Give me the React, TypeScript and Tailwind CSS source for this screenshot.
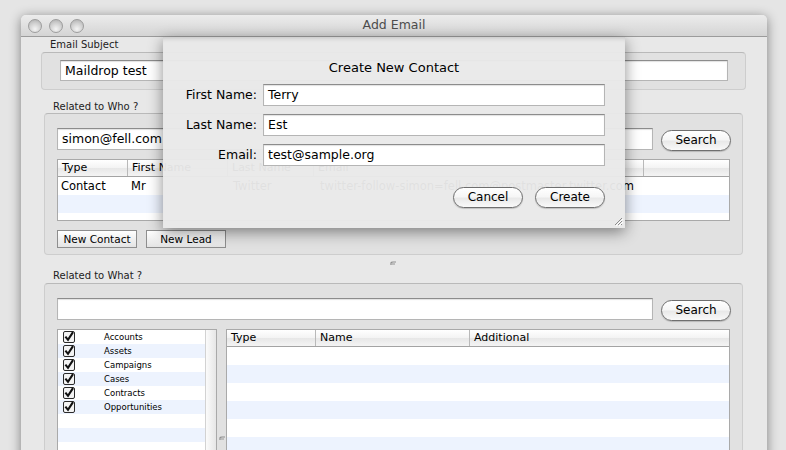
import React from 'react'

const pill =
  "h-[21px] w-[70px] rounded-full border border-[#6f6f6f] bg-[linear-gradient(#ffffff,#f6f6f6_45%,#e9e9e9_55%,#f9f9f9)] shadow-[0_1px_1px_rgba(0,0,0,0.18)] text-[12px] leading-[19px] text-center"

const headerCell =
  "h-full border-r border-[#b9b9b9] pl-[4px] text-[11px] leading-[16px] whitespace-nowrap overflow-hidden"

function TextField({ value, className }: { value?: string; className: string }) {
  return (
    <div
      className={
        'bg-white border border-[#b5b5b5] border-t-[#8c8c8c] shadow-[inset_0_1px_1px_rgba(0,0,0,0.12)] pl-[4px] text-[12.5px] leading-[19px] whitespace-nowrap overflow-hidden ' +
        className
      }
    >
      {value}
    </div>
  )
}

function CheckBox() {
  return (
    <svg width="12" height="12" viewBox="0 0 12 12">
      <rect x="0.5" y="0.5" width="11" height="11" rx="1.5" fill="#f3f3f3" stroke="#2a2a2a" />
      <path d="M2.4 5.6 L5 8.8 L10 1.2" stroke="#111" strokeWidth="2.1" fill="none" />
    </svg>
  )
}

function Grip({ className }: { className: string }) {
  return (
    <svg className={className} width="11" height="11" viewBox="0 0 11 11">
      <path d="M10 3 L3 10 M10 6 L6 10 M10 9 L9 10" stroke="#8a8a8a" strokeWidth="1" />
      <path d="M11 4 L4 11 M11 7 L7 11" stroke="#ffffff" strokeWidth="1" />
    </svg>
  )
}

function SplitDot() {
  return (
    <svg width="7" height="5" viewBox="0 0 7 5">
      <path d="M1 4 L1 2 Q1 1 3 1 L6 1" stroke="#8d8d8d" strokeWidth="1.2" fill="none" />
      <rect x="2" y="2" width="3" height="2" fill="#bdbdbd" />
    </svg>
  )
}

const whatItems = ['Accounts', 'Assets', 'Campaigns', 'Cases', 'Contracts', 'Opportunities', '', '', '']

export default function App() {
  return (
    <div className="w-[786px] h-[450px] overflow-hidden bg-[#e5e5e5] pt-[15px] pl-[21px] font-['DejaVu_Sans',sans-serif] text-black">
      <div className="w-[746px] h-[460px] rounded-t-[5px] bg-[#e8e8e8] shadow-[0_2px_12px_rgba(0,0,0,0.45)] flex flex-col">
        {/* title bar */}
        <div className="relative h-[22px] shrink-0 rounded-t-[5px] bg-[linear-gradient(#ececec,#d4d4d4)] border-b border-[#9b9b9b] flex items-center">
          <div className="flex gap-[7px] pl-[7px]">
            {[0, 1, 2].map((i) => (
              <div
                key={i}
                className="w-[14px] h-[14px] rounded-full border border-[#9d9d9d] bg-[radial-gradient(circle_at_50%_75%,#f4f4f4,#cfcfcf_55%,#ababab)]"
              />
            ))}
          </div>
          <div className="absolute inset-0 flex items-center justify-center text-[12.5px] text-[#4d4d4d]">
            Add Email
          </div>
        </div>

        {/* window body */}
        <div className="relative flex-1 flex flex-col">
          <div className="h-[15px] leading-[15px] pl-[29px] text-[10px] text-[#222]">Email Subject</div>
          <div className="ml-[20px] w-[705px] h-[38px] rounded-[4px] bg-[#e1e1e1] border border-[#cdcdcd] border-t-[#b9b9b9] pt-[7px] pl-[18px]">
            <TextField value="Maildrop test" className="w-[668px] h-[21px]" />
          </div>

          <div className="mt-[9px] h-[15px] leading-[15px] pl-[32px] text-[10px] text-[#222]">Related to Who ?</div>
          <div className="-mt-px ml-[23px] w-[699px] h-[142px] rounded-[4px] bg-[#e1e1e1] border border-[#cdcdcd] border-t-[#b9b9b9] pt-[14px] pl-[12px]">
            <div className="flex items-start">
              <TextField value="simon@fell.com" className="w-[596px] h-[22px]" />
              <div className={pill + ' ml-[8px] mt-[2px]'}>Search</div>
            </div>
            <div className="mt-[8px] w-[673px] h-[62px] bg-white border border-[#a9a9a9]">
              <div className="flex h-[17px] bg-[linear-gradient(#ffffff,#f3f3f3_50%,#e7e7e7_51%,#f4f4f4)] border-b border-[#a3a3a3]">
                <div className={headerCell + ' w-[70px]'}>Type</div>
                <div className={headerCell + ' w-[100px]'}>First Name</div>
                <div className={headerCell + ' w-[86px]'}>Last Name</div>
                <div className={headerCell + ' w-[330px]'}>Email</div>
                <div className="flex-1" />
              </div>
              <div className="flex h-[18px] text-[11.5px] leading-[18px] whitespace-nowrap">
                <div className="w-[70px] pl-[3px]">Contact</div>
                <div className="w-[100px] pl-[3px]">Mr</div>
                <div className="w-[86px] pl-[5px]">Twitter</div>
                <div className="w-[330px] pl-[6px] overflow-hidden">twitter-follow-simon=fell.com@postmaster.twitter.com</div>
              </div>
              <div className="h-[18px] bg-[#edf3fe]" />
            </div>
            <div className="mt-[9px] flex gap-[9px]">
              {['New Contact', 'New Lead'].map((b) => (
                <div
                  key={b}
                  className="w-[80px] h-[18px] border border-[#8e8e8e] bg-[linear-gradient(#ffffff,#f1f1f1_50%,#e4e4e4)] text-[10.5px] leading-[16px] text-center"
                >
                  {b}
                </div>
              ))}
            </div>
          </div>

          <div className="h-[13px] pl-[369px] pt-[6px] flex">
            <SplitDot />
          </div>
          <div className="h-[15px] leading-[15px] pl-[32px] text-[10px] text-[#222]">Related to What ?</div>
          <div className="ml-[23px] w-[699px] h-[200px] rounded-[4px] bg-[#e1e1e1] border border-[#cdcdcd] border-t-[#b9b9b9] pt-[14px] pl-[12px]">
            <div className="flex items-start">
              <TextField className="w-[596px] h-[22px]" />
              <div className={pill + ' ml-[8px] mt-[2px]'}>Search</div>
            </div>
            <div className="mt-[8px] flex">
              <div className="w-[160px] h-[140px] border border-[#a9a9a9] bg-white flex">
                <div className="w-[147px]">
                  {whatItems.map((it, i) => (
                    <div
                      key={i}
                      className={'h-[14px] flex items-center ' + (i % 2 === 1 ? 'bg-[#edf3fe]' : 'bg-white')}
                    >
                      {it && (
                        <>
                          <div className="w-[46px] pl-[5px] flex">
                            <CheckBox />
                          </div>
                          <div className="text-[8.5px] leading-[14px]">{it}</div>
                        </>
                      )}
                    </div>
                  ))}
                </div>
                <div className="flex-1 bg-[linear-gradient(90deg,#fbfbfb,#e6e6e6)] border-l border-[#d2d2d2]" />
              </div>
              <div className="w-[9px] pt-[107px] pl-[1px] flex justify-center">
                <div className="h-[5px]">
                  <SplitDot />
                </div>
              </div>
              <div className="w-[504px] h-[140px] border border-[#a9a9a9] bg-white">
                <div className="flex h-[17px] bg-[linear-gradient(#ffffff,#f3f3f3_50%,#e7e7e7_51%,#f4f4f4)] border-b border-[#a3a3a3]">
                  <div className={headerCell + ' w-[89px]'}>Type</div>
                  <div className={headerCell + ' w-[154px]'}>Name</div>
                  <div className="h-full pl-[4px] text-[11px] leading-[16px]">Additional</div>
                </div>
                {[0, 1, 2, 3, 4, 5].map((r) => (
                  <div key={r} className={'h-[18px] ' + (r % 2 === 1 ? 'bg-[#edf3fe]' : 'bg-white')} />
                ))}
              </div>
            </div>
          </div>

          {/* sheet: Create New Contact */}
          <div className="absolute left-[142px] top-0 w-[462px] h-[191px] bg-[rgba(233,233,233,0.96)] shadow-[0_4px_14px_rgba(0,0,0,0.45),inset_0_5px_5px_-4px_rgba(0,0,0,0.18)]">
            <div className="pt-[22px] h-[40px] leading-[18px] text-center text-[13px]">Create New Contact</div>
            <div className="mt-[7px] flex flex-col gap-[8px]">
              {[
                ['First Name:', 'Terry'],
                ['Last Name:', 'Est'],
                ['Email:', 'test@sample.org'],
              ].map(([l, v]) => (
                <div key={l} className="flex items-center h-[22px]">
                  <div className="w-[94px] text-right text-[12.5px]">{l}</div>
                  <TextField value={v} className="ml-[6px] w-[342px] h-[22px] text-[12.5px]" />
                </div>
              ))}
            </div>
            <div className="mt-[21px] flex justify-end gap-[12px] pr-[20px]">
              <div className={pill}>Cancel</div>
              <div className={pill}>Create</div>
            </div>
            <Grip className="absolute right-[2px] bottom-[2px]" />
          </div>
        </div>
      </div>
    </div>
  )
}
